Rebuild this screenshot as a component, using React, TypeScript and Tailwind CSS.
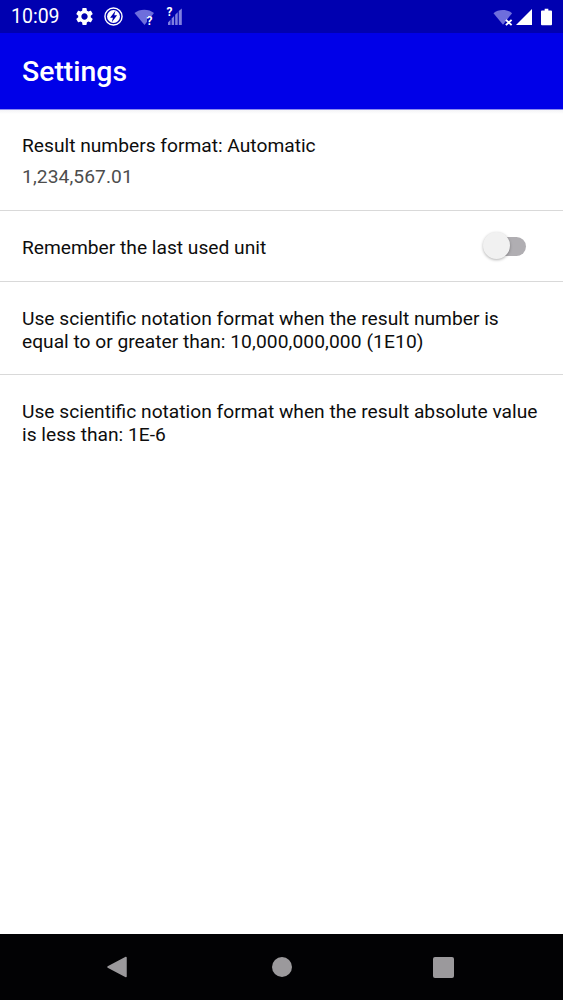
import type { ReactNode } from "react";
import { MdSettings } from "react-icons/md";

function StatusIcons() {
  return (
    <div className="flex items-center">
      <MdSettings className="ml-[14px] w-[21px] h-[21px] text-white" />
      <svg viewBox="0 0 20 20" className="ml-[9px] w-[19px] h-[19px]">
        <circle cx="10" cy="10" r="9" fill="none" stroke="#fff" strokeWidth="1.5" />
        <circle cx="10" cy="10" r="6.8" fill="#fff" />
        <path d="M12 4 6.4 11.2h3L8.2 16 13.8 8.6h-3z" fill="#0000b0" />
      </svg>
      <div className="relative ml-[11px] w-[22px] h-[18px]">
        <svg viewBox="0 0 22 18" className="w-[22px] h-[18px]">
          <path d="M0.5 5C5.5 0.5 15 0.5 20 5L10.5 17z" fill="#6e6edc" />
          <path d="M13 8h8v10h-8z" fill="#0000b0" />
        </svg>
        <span className="absolute left-[13px] top-[7px] text-white text-[12px] font-bold leading-[12px]">?</span>
      </div>
      <div className="relative ml-[11px] w-[16px] h-[18px]">
        <svg viewBox="0 0 16 18" className="w-[16px] h-[18px]">
          <path d="M1 17v-2.6l2.5-2.6V17zM4.6 17v-6.4l2.5-2.6v9zM8.2 17V6.8l2.5-2.6V17zM11.8 17V3L14.8 0.5V17z" fill="#7f7fe0" />
        </svg>
        <span className="absolute left-[0px] top-[-2px] text-white text-[12px] font-bold leading-[12px]">?</span>
      </div>
    </div>
  );
}

function Row({ className, children }: { className: string; children: ReactNode }) {
  return <div className={`border-b border-[#d9d9d9] px-[22px] ${className}`}>{children}</div>;
}

export default function App() {
  return (
    <div className="w-[563px] h-[1000px] flex flex-col bg-white overflow-hidden font-['Roboto',sans-serif]">
      <div className="h-[33px] bg-[#0000b0] flex items-center justify-between pl-[11px] pr-[11px]">
        <div className="flex items-center">
          <span className="text-white text-[19.5px] leading-none">10:09</span>
          <StatusIcons />
        </div>
        <div className="flex items-center">
          <svg viewBox="0 0 22 18" className="w-[21px] h-[18px]">
            <path d="M0.5 5C5.5 0.5 15 0.5 20 5L10.5 17z" fill="#6e6edc" />
            <path d="M13.5 12l6 5.5m0-5.5l-6 5.5" stroke="#fff" strokeWidth="2" />
          </svg>
          <svg viewBox="0 0 18 18" className="ml-[1px] w-[18px] h-[18px]">
            <path d="M1 17h16V1z" fill="#fff" />
          </svg>
          <svg viewBox="0 0 12 18" className="ml-[8px] w-[11px] h-[18px]">
            <path d="M4 0h4v2h3a1 1 0 0 1 1 1v14a1 1 0 0 1-1 1H1a1 1 0 0 1-1-1V3a1 1 0 0 1 1-1h3z" fill="#fff" />
          </svg>
        </div>
      </div>
      <div className="h-[77px] bg-[#0000e8] border-b border-[#8a8af0] flex items-center px-[22px] pt-[3px]">
        <h1 className="text-white text-[28.4px] font-medium leading-none">Settings</h1>
      </div>
      <div className="h-[4px] bg-gradient-to-b from-[#f3f3f6] to-white" />
      <div className="flex-1 flex flex-col text-[19.2px] leading-[23px] text-[#0d0d0d]">
        <Row className="h-[97px] pt-[20px]">
          <p>Result numbers format: Automatic</p>
          <p className="mt-[8px] text-[#4d4d4d] tracking-[0.1px]">1,234,567.01</p>
        </Row>
        <Row className="h-[71px] flex items-center justify-between">
          <p className="pt-[3px]">Remember the last used unit</p>
          <div className="relative w-[44px] h-[28px] mr-[15px] flex items-center justify-end">
            <div className="w-[33px] h-[19px] rounded-full bg-[#b0aeb2]" />
            <div className="absolute left-[1px] top-[0px] w-[27px] h-[27px] rounded-full bg-[#f1f1f1] shadow-[0_1px_3px_rgba(0,0,0,0.3)]" />
          </div>
        </Row>
        <Row className="h-[93px] pt-[25px]">
          <p>Use scientific notation format when the result number is</p>
          <p>equal to or greater than: <span className="tracking-[0.1px]">10,000,000,000 (1E10)</span></p>
        </Row>
        <div className="px-[22px] pt-[25px]">
          <p>Use scientific notation format when the result absolute value</p>
          <p>is less than: 1E-6</p>
        </div>
      </div>
      <div className="h-[66px] bg-[#020204] flex items-center">
        <div className="flex-1 flex items-center pl-[107px] pr-[109px] justify-between">
          <svg viewBox="0 0 20 22" className="w-[20px] h-[22px]">
            <path d="M19 1.5v19L1 11z" fill="#9b999c" stroke="#9b999c" strokeWidth="1.5" strokeLinejoin="round" />
          </svg>
          <div className="w-[20px] h-[20px] rounded-full bg-[#9b999c] ml-[3px]" />
          <div className="w-[21px] h-[21px] rounded-[2px] bg-[#9b999c]" />
        </div>
      </div>
    </div>
  );
}
